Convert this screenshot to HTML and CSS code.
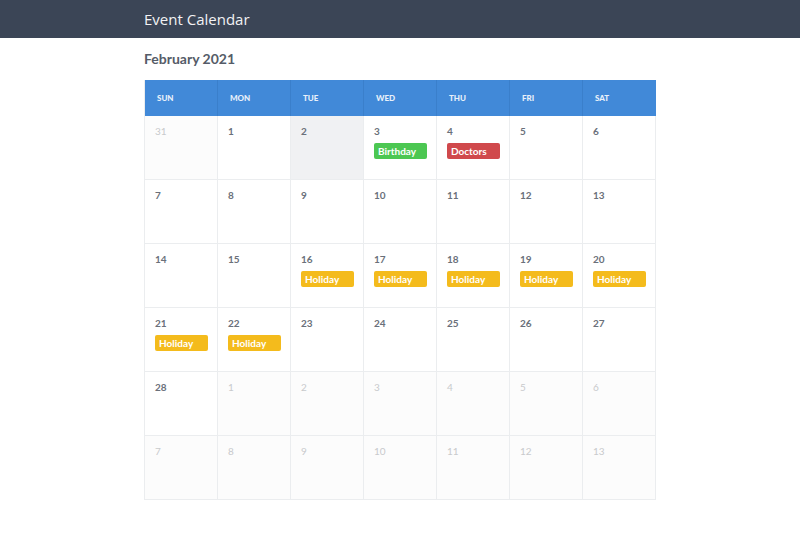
FILE: index.html
```html
<!DOCTYPE html>
<html>
<head>
<meta charset="utf-8">
<link rel="stylesheet" href="styles.css">
</head>
<body>
<header class="topbar"><div class="wrap"><span class="brand">Event Calendar</span></div></header>
<main class="wrap">
  <h1 class="month">February 2021</h1>
  <div class="cal">
    <div class="dow">SUN</div><div class="dow">MON</div><div class="dow">TUE</div><div class="dow">WED</div><div class="dow">THU</div><div class="dow">FRI</div><div class="dow">SAT</div>

    <div class="day other"><span class="num">31</span></div>
    <div class="day"><span class="num">1</span></div>
    <div class="day today"><span class="num">2</span></div>
    <div class="day"><span class="num">3</span><span class="ev green">Birthday</span></div>
    <div class="day"><span class="num">4</span><span class="ev red">Doctors</span></div>
    <div class="day"><span class="num">5</span></div>
    <div class="day"><span class="num">6</span></div>

    <div class="day"><span class="num">7</span></div>
    <div class="day"><span class="num">8</span></div>
    <div class="day"><span class="num">9</span></div>
    <div class="day"><span class="num">10</span></div>
    <div class="day"><span class="num">11</span></div>
    <div class="day"><span class="num">12</span></div>
    <div class="day"><span class="num">13</span></div>

    <div class="day"><span class="num">14</span></div>
    <div class="day"><span class="num">15</span></div>
    <div class="day"><span class="num">16</span><span class="ev yellow">Holiday</span></div>
    <div class="day"><span class="num">17</span><span class="ev yellow">Holiday</span></div>
    <div class="day"><span class="num">18</span><span class="ev yellow">Holiday</span></div>
    <div class="day"><span class="num">19</span><span class="ev yellow">Holiday</span></div>
    <div class="day"><span class="num">20</span><span class="ev yellow">Holiday</span></div>

    <div class="day"><span class="num">21</span><span class="ev yellow">Holiday</span></div>
    <div class="day"><span class="num">22</span><span class="ev yellow">Holiday</span></div>
    <div class="day"><span class="num">23</span></div>
    <div class="day"><span class="num">24</span></div>
    <div class="day"><span class="num">25</span></div>
    <div class="day"><span class="num">26</span></div>
    <div class="day"><span class="num">27</span></div>

    <div class="day"><span class="num">28</span></div>
    <div class="day other"><span class="num">1</span></div>
    <div class="day other"><span class="num">2</span></div>
    <div class="day other"><span class="num">3</span></div>
    <div class="day other"><span class="num">4</span></div>
    <div class="day other"><span class="num">5</span></div>
    <div class="day other"><span class="num">6</span></div>

    <div class="day other"><span class="num">7</span></div>
    <div class="day other"><span class="num">8</span></div>
    <div class="day other"><span class="num">9</span></div>
    <div class="day other"><span class="num">10</span></div>
    <div class="day other"><span class="num">11</span></div>
    <div class="day other"><span class="num">12</span></div>
    <div class="day other"><span class="num">13</span></div>
  </div>
</main>
</body>
</html>
```
FILE: styles.css
```css
* { box-sizing: border-box; }
html, body { margin: 0; padding: 0; background: #fff; }
body { font-family: Lato, "Open Sans", sans-serif; color: #4a5260; }
.wrap { width: 512px; margin-left: 144px; }
.topbar { background: #3b4556; height: 38px; display: flex; align-items: center; }
.brand { color: #f2f2f4; font-family: "Open Sans", sans-serif; font-size: 15px; font-weight: 400; }
.month { margin: 13px 0 13px; font-size: 14px; font-weight: 700; color: #555c68; line-height: 16px; }
.cal { display: grid; grid-template-columns: repeat(7, minmax(0, 1fr)); grid-template-rows: 36px repeat(6, 64px); border-left: 1px solid #ebedef; }
.dow { background: #4189d8; color: #e8f0fa; font-size: 8px; font-weight: 900; padding-left: 12px; display: flex; align-items: center; border-right: 1px solid #3a7fcb; }
.dow:nth-child(7) { border-right: none; }
.day { border-right: 1px solid #ebedef; border-bottom: 1px solid #ebedef; padding: 9px 0 0 10px; display: flex; flex-direction: column; align-items: flex-start; }
.num { font-size: 10px; font-weight: 700; color: #6a707a; line-height: 12px; }
.other { background: #fcfcfc; }
.other .num { color: #c8cacc; font-weight: 400; }
.today { background: #f0f1f3; }
.ev { margin-top: 6px; width: 53px; height: 16px; border-radius: 2px; color: #fff; font-size: 10px; font-weight: 700; line-height: 16px; padding-left: 4px; }
.green { background: #4cc752; }
.red { background: #d0494c; }
.yellow { background: #f4bb1c; }
```
